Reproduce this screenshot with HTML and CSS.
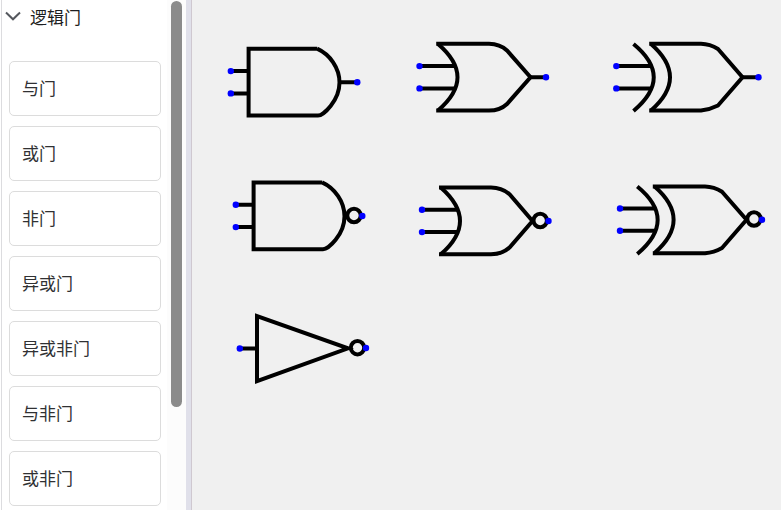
FILE: index.html
```html
<!DOCTYPE html>
<html lang="zh-CN">
<head>
<meta charset="utf-8">
<title>逻辑门</title>
<link rel="stylesheet" href="styles.css">
</head>
<body>
<div class="app">
  <aside class="sidebar">
    <div class="palette">
      <button class="group-title" type="button" aria-expanded="true">
        <svg class="chevron" width="16" height="10" viewBox="0 0 16 10" aria-hidden="true"><path d="M1 1.500L8 8.300L15 1.500"/></svg>
        <span>逻辑门</span>
      </button>
      <ul class="items">
        <li><button class="item" type="button">与门</button></li>
        <li><button class="item" type="button">或门</button></li>
        <li><button class="item" type="button">非门</button></li>
        <li><button class="item" type="button">异或门</button></li>
        <li><button class="item" type="button">异或非门</button></li>
        <li><button class="item" type="button">与非门</button></li>
        <li><button class="item" type="button">或非门</button></li>
      </ul>
    </div>
    <div class="scrollbar"><div class="thumb"></div></div>
  </aside>
  <div class="splitter"></div>
  <main class="canvas">
    <svg class="gate and" width="150" height="90" viewBox="0 0 150 90">
      <path d="M11 36.100H28M11 58.400H28M120 47.300H137"/>
      <path d="M97 13.700H28.600V80.600H98C103 80.600 119.500 66 119.500 47.500C119.500 33 110 19.500 97 13.700"/>
      <circle class="pin" cx="10.800" cy="36.100" r="3.200"/><circle class="pin" cx="10.800" cy="58.400" r="3.200"/><circle class="pin" cx="137.300" cy="47.300" r="3.200"/>
    </svg>
    <svg class="gate or" width="150" height="90" viewBox="0 0 150 90">
      <path d="M9.500 31.100H45M9.500 53.400H45M120 42.200H136"/>
      <path d="M26.200 8.800H79Q90 9 97 15.500L120.500 42.200L97 69Q90 75.600 79 75.600H26.200"/>
      <path d="M28 9Q67 42.200 28 75.400"/>
      <circle class="pin" cx="9.500" cy="31.100" r="3.200"/><circle class="pin" cx="9.500" cy="53.400" r="3.200"/><circle class="pin" cx="136" cy="42.200" r="3.200"/>
    </svg>
    <svg class="gate xor" width="170" height="90" viewBox="0 0 170 90">
      <path d="M11.300 31.100H46M11.300 53.400H46M138 42.200H153.500"/>
      <path d="M44.200 8.800H96Q105 9 113 14L137.500 42.200L113 70.500Q105 74.500 96 75.600H44.200"/>
      <path d="M46 9Q84 42.200 46 75.400M28.500 9Q69 42.200 28.500 76"/>
      <circle class="pin" cx="11.300" cy="31.100" r="3.200"/><circle class="pin" cx="11.300" cy="53.400" r="3.200"/><circle class="pin" cx="153.500" cy="42.200" r="3.200"/>
    </svg>
    <svg class="gate nand" width="150" height="90" viewBox="0 0 150 90">
      <path d="M11 34.800H28M11 57.100H28"/>
      <path d="M97 12.400H28.600V79.300H98C103 79.300 119.500 65 119.500 46.200C119.500 32 110 18.200 97 12.400"/>
      <circle cx="129" cy="45.500" r="6.700"/>
      <circle class="pin" cx="10.800" cy="34.800" r="3.200"/><circle class="pin" cx="10.800" cy="57.100" r="3.200"/><circle class="pin" cx="137.300" cy="46" r="3.200"/>
    </svg>
    <svg class="gate nor" width="150" height="90" viewBox="0 0 150 90">
      <path d="M12 34.800H48M12 57.100H48"/>
      <path d="M29 12.500H81Q92 12.700 99.500 19.200L122.500 46L99.500 72.600Q92 79.300 81 79.300H29"/>
      <path d="M31 12.700Q69 46 31 79.100"/>
      <circle cx="130.200" cy="45.500" r="6.700"/>
      <circle class="pin" cx="12" cy="34.800" r="3.200"/><circle class="pin" cx="12" cy="57.100" r="3.200"/><circle class="pin" cx="138.500" cy="46" r="3.200"/>
    </svg>
    <svg class="gate xnor" width="170" height="90" viewBox="0 0 170 90">
      <path d="M15 33.500H50M15 55.800H50"/>
      <path d="M47.800 11.400H100Q109 11.600 117 16.700L141.500 44.700L117 73Q109 77.500 100 78.200H47.800"/>
      <path d="M49.600 11.600Q87.600 44.800 49.600 78M32.300 11.500Q73 44.800 32.300 79"/>
      <circle cx="149" cy="44" r="6.700"/>
      <circle class="pin" cx="15" cy="33.500" r="3.200"/><circle class="pin" cx="15" cy="55.800" r="3.200"/><circle class="pin" cx="157" cy="44.700" r="3.200"/>
    </svg>
    <svg class="gate not" width="150" height="90" viewBox="0 0 150 90">
      <path d="M10 43.500H27"/>
      <path d="M27 11.200V76.200L118 43.300Z"/>
      <circle cx="127.500" cy="42.700" r="6.700"/>
      <circle class="pin" cx="9.800" cy="43.500" r="3.200"/><circle class="pin" cx="136" cy="43" r="3.200"/>
    </svg>
  </main>
</div>
</body>
</html>
```
FILE: styles.css
```css
* {
  box-sizing: border-box;
}

body {
  margin: 0;
  font-family: "Noto Sans CJK SC", sans-serif;
  font-size: 17px;
  color: #303133;
}

.app {
  display: flex;
  height: 100vh;
  overflow: hidden;
}

.sidebar {
  display: flex;
  flex: none;
  width: 185px;
  margin-left: 1px;
  border-left: 1px solid #dcdcdf;
  background: #fff;
}

.palette {
  flex: 1;
  padding: 0 6px 0 7px;
}

button {
  font: inherit;
  color: inherit;
  background: #fff;
}

.group-title {
  display: flex;
  align-items: center;
  gap: 9px;
  width: 100%;
  height: 32px;
  margin-left: -4px;
  padding: 0;
  border: 0;
  color: #1d1e20;
}

.chevron {
  fill: none;
  stroke: #55585e;
  stroke-width: 2;
}

.items {
  display: grid;
  gap: 10px;
  margin: 29px 0 0;
  padding: 0;
  list-style: none;
}

.item {
  display: block;
  width: 100%;
  height: 55px;
  padding: 0 12px 2px;
  border: 1px solid #dcdcdc;
  border-radius: 5px;
  text-align: left;
}

.scrollbar {
  width: 19px;
  padding: 1px 4px;
  background: #fcfcfc;
}

.thumb {
  width: 11px;
  height: 406px;
  border-radius: 6px;
  background: #8b8b8b;
}

.splitter {
  flex: none;
  width: 6px;
  border-right: 1px solid #cfc8d0;
  background: #e0e0ea;
}

.canvas {
  position: relative;
  flex: 1;
  overflow: hidden;
  background: #f0f0f0;
}

.gate {
  position: absolute;
  fill: none;
  stroke: #000;
  stroke-width: 4;
}

.pin {
  fill: #00f;
  stroke: none;
}

.and { left: 28px; top: 35px; }
.or { left: 218px; top: 35px; }
.xor { left: 413px; top: 35px; }
.nand { left: 33px; top: 170px; }
.nor { left: 218px; top: 175px; }
.xnor { left: 413px; top: 175px; }
.not { left: 38px; top: 305px; }
```
